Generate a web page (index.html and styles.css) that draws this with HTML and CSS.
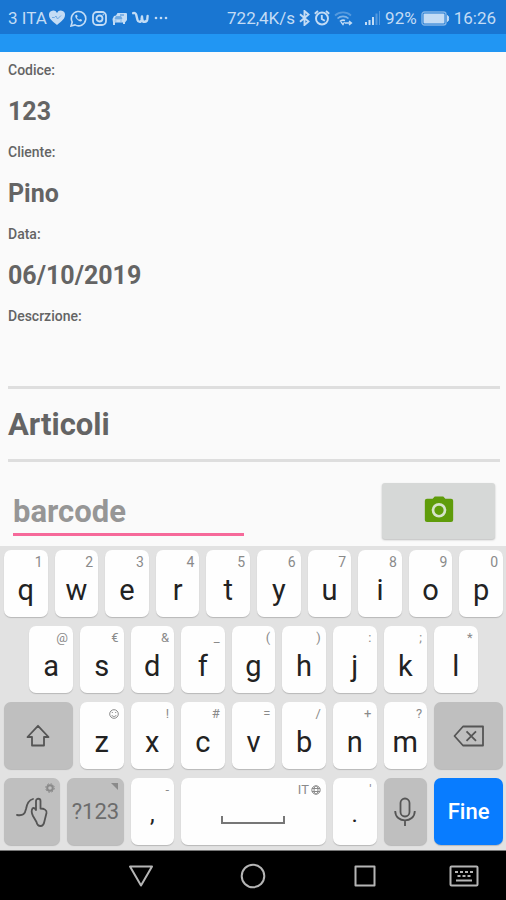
FILE: index.html
```html
<!DOCTYPE html>
<html lang="it">
<head>
<meta charset="utf-8">
<meta name="viewport" content="width=device-width, initial-scale=1">
<title>Articoli</title>
<link rel="stylesheet" href="styles.css">
</head>
<body>
<header class="status">
  <div class="status-group status-left">
    <span>3 ITA</span>
    <svg class="heart" width="16" height="16" viewBox="0 0 16 16"><path d="M8 15C3 11 0 8.500 0 5a4.200 4.200 0 0 1 8-2 4.200 4.200 0 0 1 8 2c0 3.500-3 6-8 10z" fill="currentColor"/><path d="M3 7.500h2.500L7 6l1.500 3L12 5.500" fill="none" stroke="#6fa9e2" stroke-width="1"/></svg>
    <svg width="17" height="17" viewBox="0 0 17 17" fill="none" stroke="currentColor"><path d="M1 16l1.200-4A7.200 7.200 0 1 1 5 14.900z" stroke-width="1.600"/><path d="M5.600 5c-.8 1-.3 2.700 1.500 4.500s3.500 2.500 4.700 1.600l.2-1.300-1.900-.9-1 .9c-1-.4-1.800-1.300-2.200-2.200l.7-.9L7 4.800z" fill="currentColor" stroke="none"/></svg>
    <svg width="15" height="15" viewBox="0 0 15 15" fill="none" stroke="currentColor" stroke-width="1.800"><rect x="1" y="1" width="13" height="13" rx="4"/><circle cx="7.500" cy="7.500" r="3"/><circle cx="11.300" cy="3.700" r=".4" stroke-width="1"/></svg>
    <svg width="15" height="15" viewBox="0 0 15 15"><path d="M4 4.500 5.500 2H14a1 1 0 0 1 1 1v6l-2 2.500V13h-2v-1.500H3V14H1v-2.500L.5 8 2 5z" fill="currentColor"/><path d="M3 8l1-2.500h5L10 8zM2.500 10h2M8 10h2" fill="#6fa9e2" stroke="#6fa9e2" stroke-width=".8"/><path d="M8 4h4" stroke="#3f8bda"/></svg>
    <svg width="17" height="14" viewBox="0 0 17 14" fill="none" stroke="currentColor" stroke-width="2.400" stroke-linecap="round" stroke-linejoin="round"><path d="M1.200 2.200c1.600-.4 2.600 0 3 1.600L5.500 9c.6 2.400 3.600 2.400 4 0l.5-3.500.3 3.500c.4 2.700 4.500 2.200 5-.8L15.600 5"/></svg>
    <svg width="14" height="4" viewBox="0 0 14 4" fill="currentColor"><circle cx="2" cy="2" r="1.300"/><circle cx="7" cy="2" r="1.300"/><circle cx="12" cy="2" r="1.300"/></svg>
  </div>
  <div class="status-group status-right">
    <span>722,4K/s</span>
    <svg width="11" height="16" viewBox="0 0 11 16" fill="none" stroke="currentColor" stroke-width="1.900"><path d="M1 4.300l8.500 7.200L5.500 15V1l4 3.500L1 11.700"/></svg>
    <svg width="16" height="16" viewBox="0 0 16 16" fill="none" stroke="currentColor" stroke-width="1.900"><circle cx="8" cy="8.500" r="6"/><path d="M7.800 5v4l3 1.800M.8 3.800 4 1M15.200 3.800 12 1"/></svg>
    <svg class="wifi" width="20" height="16" viewBox="0 0 20 16" fill="none" stroke="currentColor" stroke-width="1.700"><path d="M1 5.500a12 12 0 0 1 16 0" opacity=".35"/><path d="M3.500 8.500a8 8 0 0 1 11 0" opacity=".6"/><path d="M6 11.500a4.500 4.500 0 0 1 5-1"/><path d="M7 12l2 2.500 1.500-2.500M11 13h6M15 11l2.500 2-2.500 2" stroke-width="1.300"/></svg>
    <svg class="signal" width="17" height="16" viewBox="0 0 17 16" fill="currentColor"><path d="M1 12h2v3H1zM4.500 10h2v5h-2zM8 7h2v8H8z"/><path d="M11.500 3.500h2V15h-2zM15 1h1v14h-1z" opacity=".35"/></svg>
    <span>92%</span>
    <svg width="29" height="15" viewBox="0 0 29 15"><rect x="1" y="1" width="24" height="13" rx="2.500" fill="none" stroke="currentColor" stroke-width="1.400" opacity=".6"/><rect x="2.500" y="2.500" width="21" height="10" rx="1" fill="currentColor"/><path d="M26.500 4.500c1.500.4 1.500 5.600 0 6z" fill="currentColor" stroke="currentColor"/></svg>
    <span>16:26</span>
  </div>
</header>
<div class="toolbar"></div>

<main class="content">
  <dl class="fields">
    <dt>Codice:</dt><dd>123</dd>
    <dt>Cliente:</dt><dd>Pino</dd>
    <dt>Data:</dt><dd>06/10/2019</dd>
    <dt>Descrzione:</dt><dd></dd>
  </dl>
  <h1 class="section-title">Articoli</h1>
  <form class="scan">
    <input class="barcode" type="text" placeholder="barcode" aria-label="barcode">
    <button class="camera" type="button" aria-label="Fotocamera">
      <svg width="34" height="34" viewBox="0 0 24 24"><path d="M9 2.500 7.500 4H3.500A1.500 1.500 0 0 0 2 5.500v13.500A1.500 1.500 0 0 0 3.500 20.500h17a1.500 1.500 0 0 0 1.500-1.500V5.500a1.500 1.500 0 0 0-1.500-1.500h-4L15 2.500z" fill="#5f9c0a"/><circle cx="12" cy="12.200" r="4.200" fill="none" stroke="#d6e3cb" stroke-width="1.900"/></svg>
    </button>
  </form>
</main>

<section class="keyboard" aria-label="Tastiera">
  <button class="key digit"><span class="hint">1</span>q</button>
  <button class="key digit"><span class="hint">2</span>w</button>
  <button class="key digit"><span class="hint">3</span>e</button>
  <button class="key digit"><span class="hint">4</span>r</button>
  <button class="key digit"><span class="hint">5</span>t</button>
  <button class="key digit"><span class="hint">6</span>y</button>
  <button class="key digit"><span class="hint">7</span>u</button>
  <button class="key digit"><span class="hint">8</span>i</button>
  <button class="key digit"><span class="hint">9</span>o</button>
  <button class="key digit"><span class="hint">0</span>p</button>

  <button class="key indent"><span class="hint">@</span>a</button>
  <button class="key"><span class="hint">€</span>s</button>
  <button class="key"><span class="hint">&amp;</span>d</button>
  <button class="key"><span class="hint">_</span>f</button>
  <button class="key"><span class="hint">(</span>g</button>
  <button class="key"><span class="hint">)</span>h</button>
  <button class="key"><span class="hint">:</span>j</button>
  <button class="key"><span class="hint">;</span>k</button>
  <button class="key"><span class="hint">*</span>l</button>

  <button class="key wide action first" aria-label="Maiuscole">
    <svg width="24" height="24" viewBox="0 0 24 24" fill="none" stroke="currentColor" stroke-width="1.800" stroke-linejoin="round"><path d="M12 1.800 1.500 13H6v8.500h12V13h4.500z"/></svg>
  </button>
  <button class="key"><span class="hint"><svg width="10" height="10" viewBox="0 0 10 10" fill="none" stroke="currentColor"><circle cx="5" cy="5" r="4.300"/><path d="M2.700 6c1 2 3.600 2 4.600 0M3.300 3v1M6.700 3v1"/></svg></span>z</button>
  <button class="key"><span class="hint">!</span>x</button>
  <button class="key"><span class="hint">#</span>c</button>
  <button class="key"><span class="hint">=</span>v</button>
  <button class="key"><span class="hint">/</span>b</button>
  <button class="key"><span class="hint">+</span>n</button>
  <button class="key"><span class="hint">?</span>m</button>
  <button class="key wide action" aria-label="Cancella">
    <svg width="32" height="22" viewBox="0 0 32 22" fill="none" stroke="currentColor" stroke-width="1.800" stroke-linejoin="round"><path d="M10 1.500h20v19H10L1.500 11z"/><path d="M13.500 6.300l9.500 9.500M23 6.300l-9.500 9.500"/></svg>
  </button>

  <button class="key medium action" aria-label="Scrittura a gesti">
    <span class="corner"><svg width="10" height="10" viewBox="0 0 10 10" fill="none" stroke="currentColor"><circle cx="5" cy="5" r="2.800" stroke-width="2"/><circle cx="5" cy="5" r="4.300" stroke-dasharray="1.700 1.700"/></svg></span>
    <svg width="32" height="30" viewBox="0 0 32 30" fill="none" stroke="currentColor" stroke-width="1.800" stroke-linecap="round" stroke-linejoin="round"><path d="M1 18c6 1 8-1 9-6 1-6 3-9 7-10"/><path d="M20 13V4c0-3 4.500-3 4.500 0v7.500c3.500 0 6.500 1.500 6 4.500L28.500 24c-.5 3-1.500 5-4 5s-3.500-1.500-4-4l-3.500-6c-1.500-3-1.500-6-.5-7.500 1-1 2.500-.5 3 1"/></svg>
  </button>
  <button class="key medium action symbols"><span class="corner"><svg width="8" height="8" viewBox="0 0 8 8"><path d="M0 0h7v7z" fill="currentColor"/></svg></span>?123</button>
  <button class="key punct"><span class="hint">-</span>,</button>
  <button class="key space" aria-label="Spazio">
    <span class="hint">IT <svg width="10" height="10" viewBox="0 0 10 10" fill="none" stroke="currentColor"><circle cx="5" cy="5" r="4.200"/><ellipse cx="5" cy="5" rx="2" ry="4.200"/><path d="M1 3.500h8M1 6.500h8"/></svg></span>
    <svg class="bracket" width="64" height="10" viewBox="0 0 64 10" fill="none" stroke="currentColor" stroke-width="2"><path d="M1 1v7h62V1"/></svg>
  </button>
  <button class="key punct"><span class="hint">'</span>.</button>
  <button class="key action" aria-label="Dettatura">
    <svg width="22" height="30" viewBox="0 0 22 30" fill="none" stroke="currentColor" stroke-width="1.800"><rect x="6.500" y="1.500" width="9" height="18" rx="4.500"/><path d="M1.200 14c0 12.500 19.600 12.500 19.600 0M11 23.500V29"/></svg>
  </button>
  <button class="key wide done">Fine</button>
</section>

<nav class="navbar" aria-label="Navigazione">
  <button class="back" aria-label="Indietro"><svg width="26" height="24" viewBox="0 0 26 24"><path d="M2 2.500h22L13 21.500z"/></svg></button>
  <button aria-label="Home"><svg width="26" height="26" viewBox="0 0 26 26"><circle cx="13" cy="13" r="11.300"/></svg></button>
  <button aria-label="Recenti"><svg width="22" height="22" viewBox="0 0 22 22"><rect x="1.500" y="1.500" width="19" height="19"/></svg></button>
  <button aria-label="Scegli tastiera"><svg width="30" height="22" viewBox="0 0 30 22"><rect x="1.500" y="1.500" width="27" height="19" rx="1"/><path d="M6 7h18.500" stroke-dasharray="3 2"/><path d="M8.500 11h13" stroke-dasharray="3 2"/><path d="M7 15.500h16"/></svg></button>
</nav>
</body>
</html>
```
FILE: styles.css
```css
* {
  box-sizing: border-box;
}

body {
  margin: 0;
  min-height: 100vh;
  display: flex;
  flex-direction: column;
  background: #fafafa;
  color: #646464;
  font-family: Roboto, "Liberation Sans", sans-serif;
}

button {
  margin: 0;
  padding: 0;
  border: 0;
  font-family: inherit;
}

svg {
  display: block;
  flex: none;
}

.status {
  display: flex;
  justify-content: space-between;
  align-items: center;
  height: 34px;
  padding: 2px 10px 0 8px;
  background: #1976d2;
  color: #c3dcf5;
  font-size: 17px;
  line-height: 20px;
}

.status-group {
  display: flex;
  align-items: center;
  gap: 5px;
}

.status-right {
  gap: 4px;
}

.heart {
  margin-left: -3px;
}

.signal {
  margin-left: 6px;
}

.toolbar {
  height: 18px;
  background: #2196f3;
}

.content {
  flex: 1;
  padding: 9px 6px 7px 8px;
}

.fields {
  margin: 0;
  padding-bottom: 12px;
  border-bottom: 3px solid #dedede;
}

.fields dt {
  font-size: 14px;
  font-weight: 500;
  line-height: 18px;
}

.fields dd {
  min-height: 32px;
  margin: 17px 0 15px;
  font-size: 25px;
  font-weight: 700;
  line-height: 32px;
}

.fields dd:last-child {
  margin-bottom: 0;
}

.section-title {
  margin: 0;
  padding: 18px 0 16px;
  border-bottom: 3px solid #dedede;
  font-size: 31px;
  font-weight: 700;
  line-height: 36px;
}

.scan {
  display: flex;
  justify-content: space-between;
  align-items: center;
  margin-top: 21px;
  padding: 0 5px;
}

.barcode {
  width: 48%;
  height: 50px;
  padding: 4px 0 0;
  border: 0;
  border-bottom: 3px solid #f6699a;
  border-radius: 0;
  outline: 0;
  background: transparent;
  color: #646464;
  font: 700 31px Roboto, "Liberation Sans", sans-serif;
}

.barcode::placeholder {
  color: #969696;
  opacity: 1;
}

.camera {
  display: flex;
  justify-content: center;
  align-items: center;
  width: 23%;
  min-width: 113px;
  height: 56px;
  padding-bottom: 3px;
  border-radius: 3px;
  background: #d6d8d7;
  box-shadow: 0 1px 2px #00000040;
}

.keyboard {
  display: grid;
  grid-template-columns: repeat(40, minmax(0, 1fr));
  grid-auto-rows: 67px;
  gap: 9px 7px;
  padding: 4px 3px 5px 4px;
  background: #e2e2e2;
}

.key {
  position: relative;
  grid-column: span 4;
  display: flex;
  flex-direction: column;
  align-items: center;
  padding-top: 4px;
  border-radius: 7px;
  background: #fefefe;
  box-shadow: 0 1px 1px #00000030;
  color: #222;
  font-size: 29px;
  line-height: 32px;
}

.hint {
  display: flex;
  align-self: flex-end;
  align-items: center;
  gap: 2px;
  height: 16px;
  margin: 0 5px 4px 0;
  color: #8a8a8a;
  font-size: 13px;
  line-height: 16px;
}

.digit .hint {
  font-size: 14px;
}

.indent {
  grid-column: 3 / span 4;
}

.wide {
  grid-column: span 6;
}

.wide.first {
  grid-column: 1 / span 6;
}

.medium {
  grid-column: span 5;
}

.space {
  grid-column: span 12;
  color: #777;
}

.bracket {
  margin-top: 13px;
}

.punct {
  font-size: 24px;
  line-height: 24px;
}

.action {
  justify-content: center;
  padding: 0;
  background: #bfbfbf;
  color: #555;
}

.corner {
  position: absolute;
  top: 5px;
  right: 5px;
  color: #8a8a8a;
}

.symbols {
  color: #6c6c6c;
  font-size: 22px;
}

.done {
  justify-content: center;
  padding: 0;
  background: #087cff;
  color: #fff;
  font-size: 22px;
  font-weight: 500;
}

.navbar {
  display: grid;
  grid-template-columns: 3fr 4fr 4fr 4fr 3fr;
  height: 50px;
  border-top: 1px solid #777;
  background: #000;
}

.navbar button {
  display: flex;
  justify-content: center;
  align-items: center;
  background: transparent;
}

.navbar .back {
  grid-column: 2;
}

.navbar svg {
  fill: none;
  stroke: #b5b5b5;
  stroke-width: 2;
  stroke-linejoin: round;
}
```
